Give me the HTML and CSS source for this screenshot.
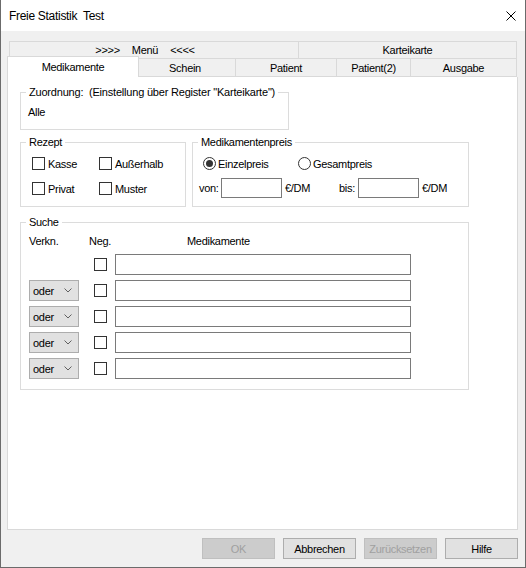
FILE: index.html
```html
<!DOCTYPE html>
<html lang="de">
  <head>
    <meta charset="UTF-8" />
    <title>Freie Statistik Test</title>
    <link rel="stylesheet" href="styles.css">
  </head>
  <body>
    <div class="window">
      <div class="titlebar">
        <span class="title">Freie Statistik&nbsp; Test</span>
        <svg class="close" width="10" height="10" viewBox="0 0 10 10">
          <path d="M0.5 0.5 L9.5 9.5 M9.5 0.5 L0.5 9.5" stroke="#000" stroke-width="1" fill="none" />
        </svg>
      </div>

      <div class="client">
        <div class="tabs">
          <div class="tab-row top">
            <div class="tab menu">
              <span>&gt;&gt;&gt;&gt;</span><span class="menu-word">Menü</span><span>&lt;&lt;&lt;&lt;</span>
            </div>
            <div class="tab kartei">Karteikarte</div>
          </div>
          <div class="tab-row bottom">
            <div class="tab active">Medikamente</div>
            <div class="tab schein">Schein</div>
            <div class="tab patient">Patient</div>
            <div class="tab patient2">Patient(2)</div>
            <div class="tab ausgabe">Ausgabe</div>
          </div>
        </div>

        <div class="panel">
          <div class="group zuordnung">
            <div class="group-title">Zuordnung:&nbsp; (Einstellung über Register "Karteikarte")</div>
            <div class="zuordnung-body">Alle</div>
          </div>

          <div class="row-mid">
            <div class="group rezept">
              <div class="group-title">Rezept</div>
              <div class="rezept-body">
                <label class="check"><span class="box"></span>Kasse</label>
                <label class="check"><span class="box"></span>Außerhalb</label>
                <label class="check"><span class="box"></span>Privat</label>
                <label class="check"><span class="box"></span>Muster</label>
              </div>
            </div>

            <div class="group preis">
              <div class="group-title">Medikamentenpreis</div>
              <div class="preis-body">
                <div class="radio-row">
                  <label class="radio-item first"><span class="radio checked"></span>Einzelpreis</label>
                  <label class="radio-item"><span class="radio"></span>Gesamtpreis</label>
                </div>
                <div class="price-row">
                  <span class="lbl-von">von:</span>
                  <span class="field price"></span>
                  <span class="unit">€/DM</span>
                  <span class="lbl-bis">bis:</span>
                  <span class="field price"></span>
                  <span class="unit last">€/DM</span>
                </div>
              </div>
            </div>
          </div>

          <div class="group suche">
            <div class="group-title">Suche</div>
            <div class="suche-body">
              <div class="suche-head">
                <span class="h-verkn">Verkn.</span>
                <span class="h-neg">Neg.</span>
                <span>Medikamente</span>
              </div>
              <div class="suche-rows">
                <div class="suche-row">
                  <span class="combo-space"></span>
                  <span class="box"></span>
                  <span class="field med"></span>
                </div>
                <div class="suche-row">
                  <span class="combo">oder<svg width="8" height="5" viewBox="0 0 8 5"><path d="M0.5 0.5 L4 4 L7.5 0.5" stroke="#606060" fill="none" /></svg></span>
                  <span class="box"></span>
                  <span class="field med"></span>
                </div>
                <div class="suche-row">
                  <span class="combo">oder<svg width="8" height="5" viewBox="0 0 8 5"><path d="M0.5 0.5 L4 4 L7.5 0.5" stroke="#606060" fill="none" /></svg></span>
                  <span class="box"></span>
                  <span class="field med"></span>
                </div>
                <div class="suche-row">
                  <span class="combo">oder<svg width="8" height="5" viewBox="0 0 8 5"><path d="M0.5 0.5 L4 4 L7.5 0.5" stroke="#606060" fill="none" /></svg></span>
                  <span class="box"></span>
                  <span class="field med"></span>
                </div>
                <div class="suche-row">
                  <span class="combo">oder<svg width="8" height="5" viewBox="0 0 8 5"><path d="M0.5 0.5 L4 4 L7.5 0.5" stroke="#606060" fill="none" /></svg></span>
                  <span class="box"></span>
                  <span class="field med"></span>
                </div>
              </div>
            </div>
          </div>
        </div>

        <div class="buttons">
          <button disabled>OK</button>
          <button>Abbrechen</button>
          <button disabled>Zurücksetzen</button>
          <button>Hilfe</button>
        </div>
      </div>
    </div>
  </body>
</html>
```

FILE: styles.css
```css
html,
body {
  margin: 0;
}
body {
  font-family: "Liberation Sans", Arial, sans-serif;
  font-size: 11px;
  letter-spacing: -0.3px;
  color: #000;
  background-color: #f0f0f0;
}

.window {
  width: 526px;
  height: 568px;
  box-sizing: border-box;
  border: 1px solid #6b6b6b;
  border-top: none;
  display: flex;
  flex-direction: column;
}

.titlebar {
  height: 31px;
  flex-shrink: 0;
  background-color: #ffffff;
  display: flex;
  align-items: center;
  justify-content: space-between;
  padding: 0 9px 0 8px;
  font-size: 12px;
  letter-spacing: -0.3px;
}

.client {
  flex: 1;
  background-color: #f0f0f0;
  padding: 10px 7px 0 6px;
  display: flex;
  flex-direction: column;
}

/* tabs */
.tab-row {
  display: flex;
}
.tab-row.top {
  margin-left: 2px;
}
.tab {
  box-sizing: border-box;
  display: flex;
  align-items: center;
  justify-content: center;
  background-color: #f0f0f0;
  border: 1px solid #d9d9d9;
}
.tab-row.top .tab {
  height: 17px;
  border-bottom: none;
}
.tab.menu {
  width: 289px;
  border-right: none;
  padding-right: 18px;
}
.menu-word {
  margin: 0 12px;
}
.tab.kartei {
  width: 219px;
}
.tab-row.bottom .tab {
  height: 19px;
  border-left: none;
}
.tab.active {
  width: 132px;
  height: 21px !important;
  margin-top: -2px;
  background-color: #ffffff;
  border-left: 1px solid #d9d9d9 !important;
  border-bottom: none;
  padding-bottom: 1px;
}
.tab.schein { width: 97px; padding-right: 4px; }
.tab.patient { width: 101px; }
.tab.patient2 { width: 74px; }
.tab.ausgabe { width: 106px; }

/* panel */
.panel {
  height: 453px;
  box-sizing: border-box;
  background-color: #ffffff;
  border: 1px solid #d9d9d9;
  border-top: none;
  padding: 1px 12px 0;
}

/* group boxes: the title sits on the top border line */
.group {
  box-sizing: border-box;
  border: 1px solid #dcdcdc;
}
.group-title {
  width: fit-content;
  margin: -7px 0 0 5px;
  padding: 0 3px;
  line-height: 13px;
  background-color: #ffffff;
}

.zuordnung {
  margin-top: 14px;
  width: 269px;
}
.zuordnung .group-title {
  letter-spacing: -0.2px;
}
.zuordnung-body {
  padding: 7px 0 10px 7px;
  line-height: 13px;
}

.row-mid {
  display: flex;
  gap: 6px;
  margin-top: 12px;
}
.rezept {
  width: 166px;
}
.preis {
  width: 277px;
}

.rezept-body {
  display: grid;
  grid-template-columns: 67px auto;
  row-gap: 12px;
  padding: 8px 0 11px 11px;
}
.check {
  display: flex;
  align-items: center;
  gap: 3px;
  height: 13px;
}
.box {
  display: inline-block;
  width: 13px;
  height: 13px;
  box-sizing: border-box;
  border: 1px solid #333333;
  background-color: #ffffff;
  flex-shrink: 0;
}

.preis-body {
  padding: 8px 0 8px 6px;
}
.radio-row {
  display: flex;
  height: 13px;
  margin-left: 4px;
}
.radio-item {
  display: flex;
  align-items: center;
  gap: 2px;
}
.radio-item.first {
  width: 95px;
}
.radio {
  width: 13px;
  height: 13px;
  box-sizing: border-box;
  border: 1px solid #333333;
  border-radius: 50%;
  background-color: #ffffff;
  display: flex;
  align-items: center;
  justify-content: center;
}
.radio.checked::after {
  content: "";
  width: 7px;
  height: 7px;
  border-radius: 50%;
  background-color: #333333;
}
.price-row {
  display: flex;
  align-items: center;
  height: 20px;
  margin-top: 8px;
}
.price-row > span {
  flex-shrink: 0;
}
.lbl-von {
  width: 22px;
}
.lbl-bis {
  width: 19px;
}
.unit {
  width: 54px;
  margin-left: 3px;
}
.unit.last {
  width: auto;
}
.field {
  display: inline-block;
  box-sizing: border-box;
  border: 1px solid #7a7a7a;
  background-color: #ffffff;
}
.field.price {
  width: 61px;
  height: 20px;
}

.suche {
  margin-top: 15px;
  width: 449px;
}
.suche-body {
  padding: 6px 0 10px 8px;
}
.suche-head {
  display: flex;
  line-height: 13px;
}
.h-verkn {
  width: 60px;
}
.h-neg {
  width: 98px;
}
.suche-rows {
  display: flex;
  flex-direction: column;
  gap: 5px;
  margin-top: 6px;
}
.suche-row {
  display: flex;
  align-items: center;
  height: 21px;
}
.combo,
.combo-space {
  width: 50px;
  height: 21px;
  box-sizing: border-box;
  flex-shrink: 0;
}
.combo {
  display: flex;
  align-items: center;
  justify-content: space-between;
  padding: 0 6px 0 3px;
  background-color: #e1e1e1;
  border: 1px solid #adadad;
}
.suche-row .box {
  margin-left: 15px;
}
.field.med {
  width: 296px;
  height: 21px;
  margin-left: 8px;
}

/* dialog buttons */
.buttons {
  display: flex;
  justify-content: flex-end;
  gap: 8px;
  margin-top: 8px;
}
button {
  width: 73px;
  height: 21px;
  padding: 0;
  font: inherit;
  letter-spacing: inherit;
  color: #000;
  background-color: #e1e1e1;
  border: 1px solid #adadad;
}
button:disabled {
  color: #a0a0a0;
  background-color: #cccccc;
  border-color: #bfbfbf;
}
```
